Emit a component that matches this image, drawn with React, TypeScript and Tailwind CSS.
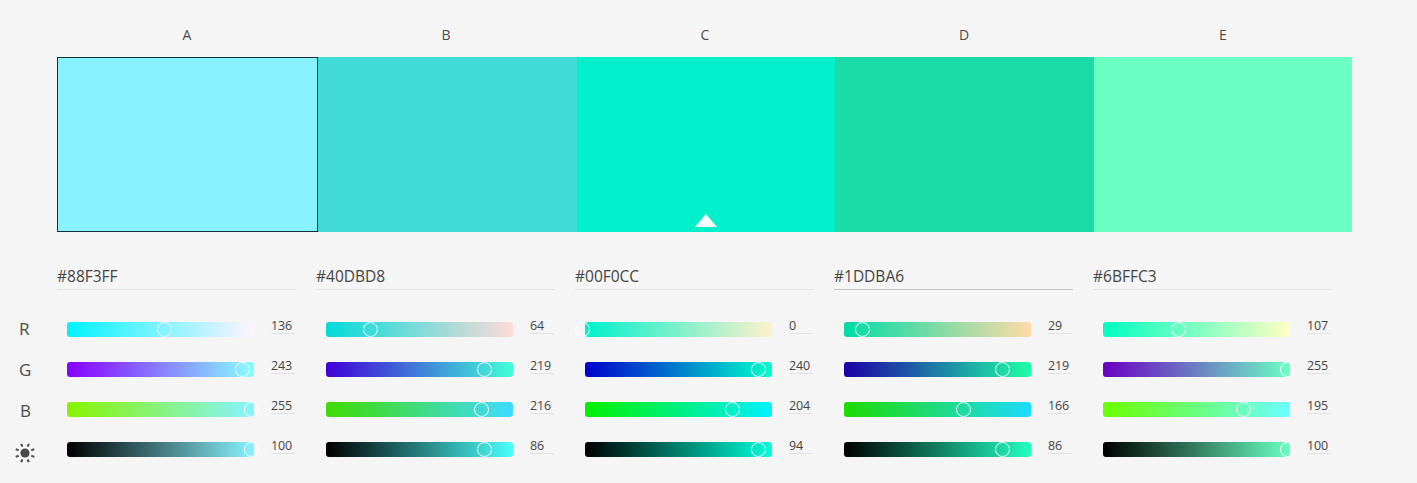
const colors = [
  { letter: 'A', hex: '#88F3FF', r: 136, g: 243, b: 255, v: 100 },
  { letter: 'B', hex: '#40DBD8', r: 64, g: 219, b: 216, v: 86 },
  { letter: 'C', hex: '#00F0CC', r: 0, g: 240, b: 204, v: 94 },
  { letter: 'D', hex: '#1DDBA6', r: 29, g: 219, b: 166, v: 86 },
  { letter: 'E', hex: '#6BFFC3', r: 107, g: 255, b: 195, v: 100 },
];

type Color = (typeof colors)[number];

function rows(c: Color) {
  const k = 100 / c.v;
  const top = `rgb(${c.r * k},${c.g * k},${c.b * k})`;
  return [
    { value: c.r, max: 255, from: `rgb(0,${c.g},${c.b})`, to: `rgb(255,${c.g},${c.b})` },
    { value: c.g, max: 255, from: `rgb(${c.r},0,${c.b})`, to: `rgb(${c.r},255,${c.b})` },
    { value: c.b, max: 255, from: `rgb(${c.r},${c.g},0)`, to: `rgb(${c.r},${c.g},255)` },
    { value: c.v, max: 100, from: '#000', to: top },
  ];
}

function SunIcon() {
  const rays = [22.5, 67.5, 112.5, 157.5, 202.5, 247.5, 292.5, 337.5];
  return (
    <svg width="22" height="22" viewBox="0 0 22 22" className="text-[#4a4a4a]">
      <circle cx="11" cy="11" r="4.6" fill="currentColor" />
      {rays.map((deg) => (
        <line
          key={deg}
          x1="11"
          y1="4.2"
          x2="11"
          y2="1"
          stroke="currentColor"
          strokeWidth="2"
          transform={`rotate(${deg} 11 11)`}
        />
      ))}
    </svg>
  );
}

function Slider({ value, max, from, to }: { value: number; max: number; from: string; to: string }) {
  return (
    <div className="flex h-[15px] items-start">
      <div
        className="relative h-[15px] w-[187px] rounded-[3px]"
        style={{ background: `linear-gradient(to right, ${from}, ${to})` }}
      >
        <span
          className="absolute top-0 h-[15px] w-[15px] rounded-full border border-white"
          style={{ left: (value / max) * 187.5 - 10.5 }}
        />
      </div>
      <div className="ml-[17px] -mt-[3px] h-[15px] w-[24px] border-b border-[#e2e2e2] text-[12.5px] leading-[14px] tracking-[-0.2px] text-[#444]">
        {value}
      </div>
    </div>
  );
}

const swatchWidths = ['w-[261px] border border-[#14303a]', 'w-[259px]', 'w-[258px]', 'w-[259px]', 'w-[258px]'];

export default function App() {
  return (
    <div className="h-[483px] w-[1417px] overflow-hidden bg-[#f5f5f5] font-['Open_Sans',sans-serif] text-[#4b4b4b]">
      <div className="flex pl-[57px] pt-[26px]">
        {colors.map((c) => (
          <div key={c.letter} className="w-[259px] pl-px text-center text-[14px] leading-[18px]">
            {c.letter}
          </div>
        ))}
      </div>

      <div className="mt-[13px] flex pl-[57px]">
        {colors.map((c, i) => (
          <div key={c.letter} className={`relative h-[175px] ${swatchWidths[i]}`} style={{ backgroundColor: c.hex }}>
            {i === 2 && (
              <span className="absolute bottom-[5px] left-[118px] h-0 w-0 border-x-[11px] border-b-[13px] border-x-transparent border-b-white" />
            )}
          </div>
        ))}
      </div>

      <div className="mt-[33px] flex">
        <div className="flex w-[57px] flex-col pt-[52px] text-[17px] leading-[24px]">
          <div className="ml-[19px] h-[41px]">R</div>
          <div className="ml-[19px] h-[41px]">G</div>
          <div className="ml-[20px] h-[43px]">B</div>
          <div className="ml-[14px]">
            <SunIcon />
          </div>
        </div>
        {colors.map((c, i) => (
          <div key={c.letter} className="w-[259px]">
            <div
              className={`h-[25px] w-[239px] border-b text-[15.5px] leading-[22px] text-[#444] ${i === 3 ? 'border-[#c4c4c4]' : 'border-[#e2e2e2]'}`}
            >
              {c.hex}
            </div>
            <div className="mt-[32px] flex flex-col gap-[25px] pl-[10px]">
              {rows(c).map((row, j) => (
                <Slider key={j} {...row} />
              ))}
            </div>
          </div>
        ))}
      </div>
    </div>
  );
}
